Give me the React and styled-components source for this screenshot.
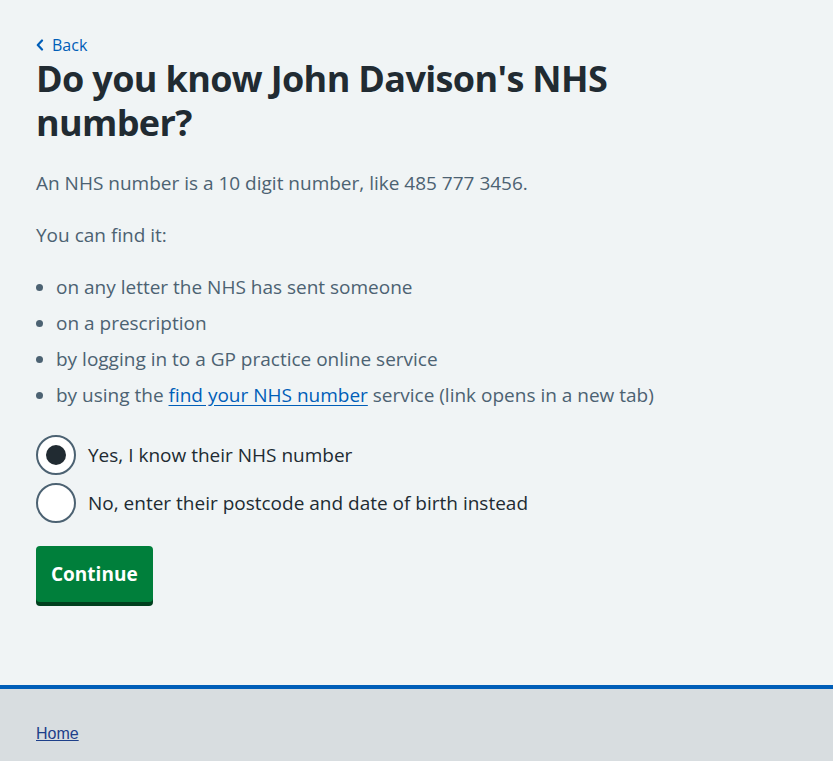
import React, {useState} from 'react'
import styled, {createGlobalStyle} from 'styled-components'

const GlobalStyle = createGlobalStyle`
html, body {
	margin:0;
	padding:0;
	background:#f0f4f5;
}
body {
	font-family:"Open Sans", "Noto Sans", Arial, sans-serif;
	color:#212b32;
}
`

const Page = styled.div`
display:flex;
flex-direction:column;
`

const Main = styled.main`
padding:33px 36px 83px;
`

const BackLink = styled.a`
display:inline-flex;
align-items:center;
gap:8px;
color:#005eb8;
font-size:16px;
line-height:24px;
text-decoration:none;
`

const Heading = styled.h1`
margin:0 0 24px;
font-size:36px;
line-height:44px;
font-weight:700;
color:#212b32;
max-width:620px;
letter-spacing:-0.65px;
`

const Para = styled.p`
margin:0 0 24px;
font-size:19px;
line-height:28px;
color:#4c6272;
`

const List = styled.ul`
margin:0 0 26px;
padding:0 0 0 20px;
list-style:disc;
color:#4c6272;
`

const Item = styled.li`
font-size:19px;
line-height:28px;
margin-bottom:8px;
padding-left:0;
`

const TextLink = styled.a`
color:#005eb8;
text-decoration:underline;
text-underline-offset:3px;
`

const Radios = styled.div`
display:flex;
flex-direction:column;
gap:8px;
margin-bottom:23px;
`

const RadioRow = styled.label`
display:flex;
align-items:center;
gap:12px;
font-size:19px;
line-height:28px;
color:#212b32;
cursor:pointer;
`

const RadioCircle = styled.span`
width:40px;
height:40px;
box-sizing:border-box;
border:2px solid #4c6272;
border-radius:50%;
background:#ffffff;
display:flex;
align-items:center;
justify-content:center;
flex-shrink:0;
&::after {
	content:'';
	width:20px;
	height:20px;
	border-radius:50%;
	background:#212b32;
	display:${props => props.checked ? 'block' : 'none'};
}
`

const Button = styled.button`
font-family:inherit;
font-size:19px;
font-weight:700;
line-height:28px;
color:#ffffff;
background:#007f3b;
border:0;
border-radius:4px;
padding:14px 15px;
box-shadow:0 4px 0 #00401e;
cursor:pointer;
`

const Footer = styled.footer`
background:#d8dde0;
border-top:4px solid #005eb8;
padding:33px 36px 30px;
`

const FooterLink = styled.a`
font-family:"Liberation Sans", Arial, sans-serif;
font-size:16px;
line-height:20px;
color:#1d3f8a;
text-decoration:underline;
`

const Chevron = () => (
	<svg width="8" height="12" viewBox="0 0 8 12" fill="none">
		<path d="M6 1.5L1.8 6L6 10.5" stroke="#005eb8" strokeWidth="2.2" strokeLinecap="round" strokeLinejoin="round"/>
	</svg>
)

const options = [
	{id: 'yes', label: 'Yes, I know their NHS number'},
	{id: 'no', label: 'No, enter their postcode and date of birth instead'}
]

export default function App () {
	const [choice, setChoice] = useState('yes')

	return (
		<Page>
			<GlobalStyle/>
			<Main>
				<BackLink href="#"><Chevron/>Back</BackLink>
				<Heading>Do you know John Davison's NHS number?</Heading>
				<Para>An NHS number is a 10 digit number, like 485 777 3456.</Para>
				<Para>You can find it:</Para>
				<List>
					<Item>on any letter the NHS has sent someone</Item>
					<Item>on a prescription</Item>
					<Item>by logging in to a GP practice online service</Item>
					<Item>by using the <TextLink href="#">find your NHS number</TextLink> service (link opens in a new tab)</Item>
				</List>
				<Radios>
					{options.map(option =>
						<RadioRow key={option.id} onClick={() => setChoice(option.id)}>
							<RadioCircle checked={choice === option.id}/>
							{option.label}
						</RadioRow>
					)}
				</Radios>
				<Button>Continue</Button>
			</Main>
			<Footer>
				<FooterLink href="#">Home</FooterLink>
			</Footer>
		</Page>
	)
}
